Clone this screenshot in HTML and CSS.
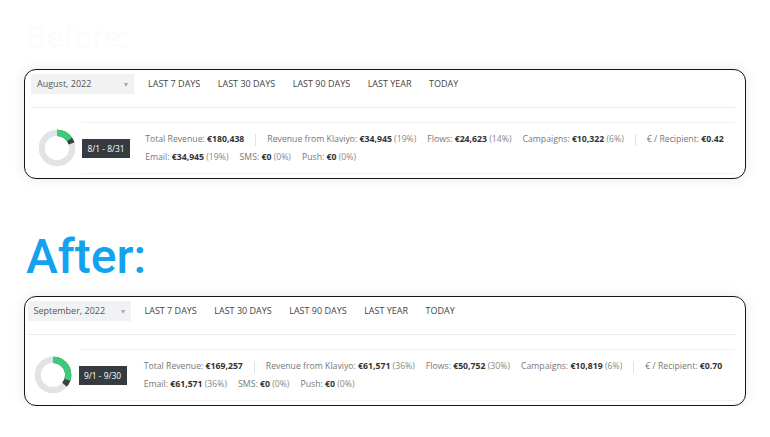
FILE: index.html
```html
<!DOCTYPE html>
<html lang="en">
<head>
    <meta charset="UTF-8">
    <meta name="viewport" content="width=device-width, initial-scale=1.0">
    <title>Revenue summary - before and after</title>
    <link rel="stylesheet" href="styles.css">
</head>
<body>

<h2 class="label label-before">Before:</h2>

<section class="card card-before">
    <div class="toolbar">
        <div class="picker">
            <span>August, 2022</span>
            <span class="caret">&#9662;</span>
        </div>
        <nav class="ranges">
            <a>Last 7 days</a>
            <a>Last 30 days</a>
            <a>Last 90 days</a>
            <a>Last year</a>
            <a>Today</a>
        </nav>
    </div>
    <div class="summary">
        <svg class="donut" viewBox="0 0 40 40" width="38" height="38">
            <circle cx="20" cy="20" r="16" fill="none" stroke="#e1e4e7" stroke-width="6.5"/>
            <!-- flows 14%, campaigns 6% -->
            <circle cx="20" cy="20" r="16" fill="none" stroke="#3a4046" stroke-width="6.5"
                    stroke-dasharray="20.1 100.5" transform="rotate(-90 20 20)"/>
            <circle cx="20" cy="20" r="16" fill="none" stroke="#3ccb79" stroke-width="6.5"
                    stroke-dasharray="15.5 100.5" transform="rotate(-90 20 20)"/>
        </svg>
        <div class="summary-body">
            <span class="badge">8/1 - 8/31</span>
            <div class="stats">
                <div class="row">
                    <span class="stat">Total Revenue: <b>€180,438</b></span>
                    <span class="sep"></span>
                    <span class="stat">Revenue from Klaviyo: <b>€34,945</b> <i>(19%)</i></span>
                    <span class="stat">Flows: <b>€24,623</b> <i>(14%)</i></span>
                    <span class="stat">Campaigns: <b>€10,322</b> <i>(6%)</i></span>
                    <span class="sep"></span>
                    <span class="stat">€ / Recipient: <b>€0.42</b></span>
                </div>
                <div class="row">
                    <span class="stat">Email: <b>€34,945</b> <i>(19%)</i></span>
                    <span class="stat">SMS: <b>€0</b> <i>(0%)</i></span>
                    <span class="stat">Push: <b>€0</b> <i>(0%)</i></span>
                </div>
            </div>
        </div>
    </div>
</section>

<h2 class="label label-after">After:</h2>

<section class="card card-after">
    <div class="toolbar">
        <div class="picker">
            <span>September, 2022</span>
            <span class="caret">&#9662;</span>
        </div>
        <nav class="ranges">
            <a>Last 7 days</a>
            <a>Last 30 days</a>
            <a>Last 90 days</a>
            <a>Last year</a>
            <a>Today</a>
        </nav>
    </div>
    <div class="summary">
        <svg class="donut" viewBox="0 0 40 40" width="38" height="38">
            <circle cx="20" cy="20" r="16" fill="none" stroke="#e1e4e7" stroke-width="6.5"/>
            <!-- flows 30%, campaigns 6% -->
            <circle cx="20" cy="20" r="16" fill="none" stroke="#3a4046" stroke-width="6.5"
                    stroke-dasharray="36.2 100.5" transform="rotate(-90 20 20)"/>
            <circle cx="20" cy="20" r="16" fill="none" stroke="#3ccb79" stroke-width="6.5"
                    stroke-dasharray="30.2 100.5" transform="rotate(-90 20 20)"/>
        </svg>
        <div class="summary-body">
            <span class="badge">9/1 - 9/30</span>
            <div class="stats">
                <div class="row">
                    <span class="stat">Total Revenue: <b>€169,257</b></span>
                    <span class="sep"></span>
                    <span class="stat">Revenue from Klaviyo: <b>€61,571</b> <i>(36%)</i></span>
                    <span class="stat">Flows: <b>€50,752</b> <i>(30%)</i></span>
                    <span class="stat">Campaigns: <b>€10,819</b> <i>(6%)</i></span>
                    <span class="sep"></span>
                    <span class="stat">€ / Recipient: <b>€0.70</b></span>
                </div>
                <div class="row">
                    <span class="stat">Email: <b>€61,571</b> <i>(36%)</i></span>
                    <span class="stat">SMS: <b>€0</b> <i>(0%)</i></span>
                    <span class="stat">Push: <b>€0</b> <i>(0%)</i></span>
                </div>
            </div>
        </div>
    </div>
</section>

</body>
</html>
```

FILE: styles.css
```css
body { margin: 0; padding: 0; background: #fff; font-family: "Open Sans", Arial, sans-serif; color: #333; }

.label { margin: 0; padding-left: 26px; font-family: Roboto, "Open Sans", sans-serif; font-weight: 500; line-height: 1; }
.label-before { font-size: 32px; padding-top: 21px; padding-bottom: 16px; color: #fcfcfc; }
.label-after { font-size: 48px; padding-top: 54px; padding-bottom: 15px; color: #14a2f0; }

.card { margin: 0 24px; padding: 3.5px 10px 4px 6px; border: 1.5px solid #161616; border-radius: 12px; box-shadow: 0 0 14px rgba(0,0,0,0.09); background: #fff; }
.card-after { padding-left: 2.5px; }

.toolbar { display: flex; align-items: center; height: 20px; padding-bottom: 13.5px; border-bottom: 1px solid #ebebeb; }
.picker { width: 91px; height: 20px; padding: 0 6px; display: flex; align-items: center; justify-content: space-between; background: #f1f2f3; font-size: 9px; color: #555; }
.caret { font-size: 8px; color: #aaa; }
.ranges { display: flex; gap: 17.5px; margin-left: 14px; }
.ranges a { font-size: 9px; text-transform: uppercase; color: #444; }

.summary { display: flex; align-items: center; margin-top: 14px; }
.donut { display: block; margin-left: 6.5px; margin-right: 6.5px; }
.summary-body { flex: 1; display: flex; align-items: center; height: 50px; border-top: 1px solid #f1f1f1; border-bottom: 1px solid #f1f1f1; }
.badge { display: flex; align-items: center; height: 19px; padding: 0 5.5px; background: #353b41; color: #fff; font-size: 8.4px; }
.stats { margin-left: 15px; display: flex; flex-direction: column; gap: 6px; }
.card-after .stats { margin-left: 17px; }
.row { display: flex; align-items: center; gap: 11px; font-size: 8.7px; line-height: 11px; color: #777; }
.stat b { color: #333; font-weight: 700; }
.stat i { font-style: normal; color: #888; }
.sep { width: 1px; height: 12px; background: #e2e2e2; }
```
